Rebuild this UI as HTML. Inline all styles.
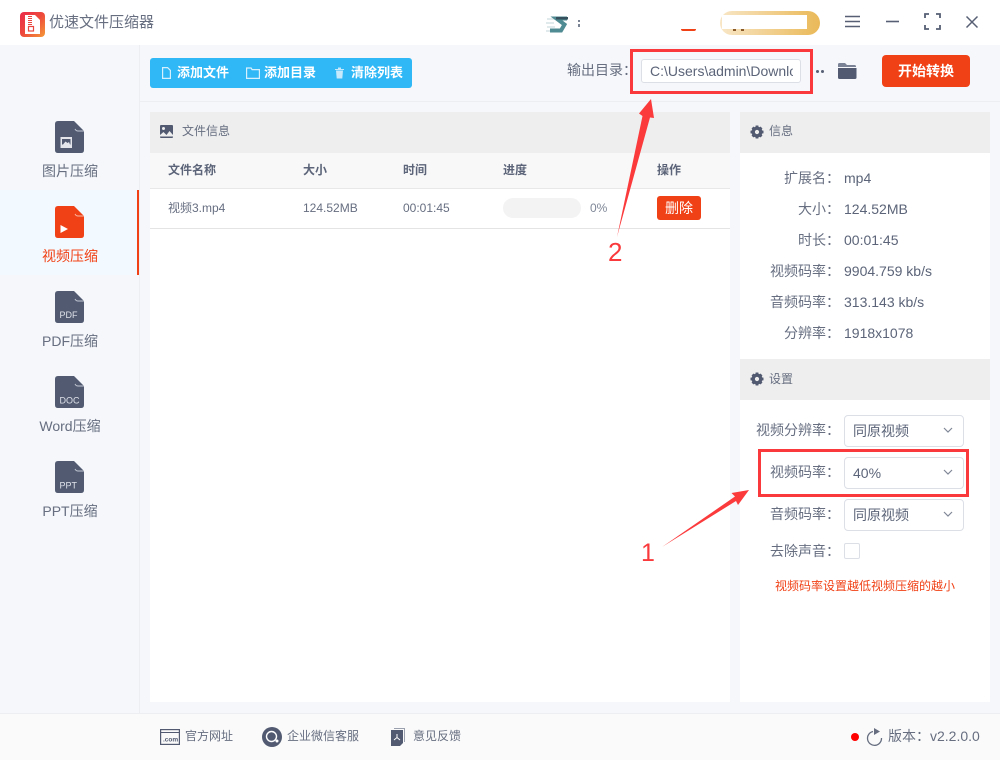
<!DOCTYPE html>
<html lang="zh-CN">
<head>
<meta charset="utf-8">
<title>优速文件压缩器</title>
<style>
html,body{margin:0;padding:0}
body{width:1000px;height:760px;position:relative;overflow:hidden;background:#f5f7fa;font-family:"Liberation Sans","Noto Sans CJK SC",sans-serif;color:#5b6478;font-size:13px}
.a{position:absolute}
.t{position:absolute;white-space:nowrap;line-height:18px}
.c{transform:translateX(-50%)}
.r{text-align:right}
svg{position:absolute;overflow:visible}
.sel{position:absolute;left:844px;width:118px;height:30px;border:1px solid #dcdfe6;border-radius:4px;background:#fff}
.sel span{position:absolute;left:8px;top:6px;font-size:14px;line-height:18px;color:#5b6478}
.sel svg{left:98px;top:11px}
</style>
</head>
<body>
<!-- title bar -->
<div class="a" style="left:0;top:0;width:1000px;height:45px;background:#fff"></div>
<div class="a" style="left:20px;top:12px;width:25px;height:25px;border-radius:4px;background:linear-gradient(135deg,#ea2b4a 0%,#ee4a3c 50%,#f59a37 100%)"></div>
<svg style="left:25px;top:15px" width="15" height="19" viewBox="0 0 15 19"><path d="M0 0h10l5 5v14H0z" fill="#fff"/><path d="M3 1.500h4M3 3.500h4M3 5.500h4M3 7.500h4M3 9.500h4" stroke="#e8463f" stroke-width="1"/><rect x="3.500" y="11.500" width="5" height="4.500" fill="none" stroke="#e8463f" stroke-width="1.200"/></svg>
<div class="t" style="left:49px;top:13px;font-size:15px;line-height:20px;color:#666e80">优速文件压缩器</div>

<svg style="left:546px;top:15px" width="24" height="19" viewBox="0 0 24 19"><path d="M1 4h9M0 8h8M1 12h8M0 16h8" stroke="#d5e3e5" stroke-width="1.600"/><path d="M21 3.500H10.500L18.500 9.500 15 15.500H4" fill="none" stroke="#4f8b92" stroke-width="4"/><path d="M10 2h12v2.500H10z" fill="#36505e"/></svg>
<div class="a" style="left:578px;top:20px;width:2px;height:2px;background:#7b8494"></div>
<div class="a" style="left:578px;top:24px;width:2px;height:3px;background:#7b8494"></div>
<div class="a" style="left:681px;top:29px;width:15px;height:2px;background:#f04116;border-radius:0 0 6px 6px"></div>
<div class="a" style="left:720px;top:11px;width:100px;height:24px;border-radius:12px;background:linear-gradient(90deg,#f8e6c6,#eab958)"></div>
<div class="a" style="left:722px;top:15px;width:85px;height:14px;background:#fff"></div>
<div class="a" style="left:733px;top:29px;width:3px;height:2px;background:#8a5a2a"></div>
<div class="a" style="left:741px;top:29px;width:3px;height:2px;background:#8a5a2a"></div>

<svg style="left:844px;top:15px" width="18" height="13" viewBox="0 0 18 13"><path d="M1 1.500h15M1 6.500h15M1 11.500h15" stroke="#565f74" stroke-width="1.600"/></svg>
<svg style="left:886px;top:20px" width="15" height="3" viewBox="0 0 15 3"><path d="M0 1.500h13" stroke="#565f74" stroke-width="1.600"/></svg>
<svg style="left:924px;top:13px" width="17" height="17" viewBox="0 0 17 17"><path d="M1 5V1h4M12 1h4v4M16 12v4h-4M5 16H1v-4" fill="none" stroke="#565f74" stroke-width="1.800"/></svg>
<svg style="left:965px;top:15px" width="14" height="14" viewBox="0 0 14 14"><path d="M1.500 1.500l11 11M12.500 1.500l-11 11" stroke="#565f74" stroke-width="1.500"/></svg>

<!-- structure lines -->
<div class="a" style="left:139px;top:45px;width:1px;height:668px;background:#eceef1"></div>
<div class="a" style="left:140px;top:101px;width:860px;height:1px;background:#eceef1"></div>

<!-- toolbar -->
<div class="a" style="left:150px;top:58px;width:262px;height:30px;border-radius:3px;background:#2fb7f6"></div>
<svg style="left:162px;top:67px" width="9" height="12" viewBox="0 0 9 12"><path d="M.6.600h5l2.800 2.800v8H.6z" fill="none" stroke="#d7f0fd" stroke-width="1.200"/></svg>
<div class="t" style="left:177px;top:64px;font-size:13px;font-weight:700;color:#fff">添加文件</div>
<svg style="left:246px;top:67px" width="14" height="12" viewBox="0 0 14 12"><path d="M.6 1h4.500l1 1.600h7.300v8.800H.6z" fill="none" stroke="#d7f0fd" stroke-width="1.200"/></svg>
<div class="t" style="left:264px;top:64px;font-size:13px;font-weight:700;color:#fff">添加目录</div>
<svg style="left:335px;top:67px" width="9" height="12" viewBox="0 0 9 12"><path d="M0 2h9v1H0zM3 .5h3V2H3z" fill="#c6e9fb"/><path d="M1 3.500h7L7.300 11.500H1.700z" fill="#c6e9fb"/></svg>
<div class="t" style="left:351px;top:64px;font-size:13px;font-weight:700;color:#fff">清除列表</div>

<div class="t" style="left:567px;top:61px;font-size:14px;color:#666e80">输出目录：</div>
<div class="a" style="left:641px;top:59px;width:158px;height:22px;border:1px solid #dcdfe6;border-radius:3px;background:#fff"></div>
<div class="a" style="left:650px;top:61px;width:143px;height:20px;overflow:hidden;white-space:nowrap;font-size:14px;line-height:20px;color:#5b6478">C:\Users\admin\Downloads</div>
<div class="a" style="left:816px;top:70px;width:3px;height:3px;border-radius:50%;background:#565f74"></div>
<div class="a" style="left:821px;top:70px;width:3px;height:3px;border-radius:50%;background:#565f74"></div>
<svg style="left:837px;top:62px" width="20" height="18" viewBox="0 0 20 18"><path d="M1 2.500Q1 1 2.500 1H8l2 2h7.500Q19 3 19 4.500V5H1z" fill="#7a8296"/><path d="M1 6h18.500v9.500q0 1.500-1.500 1.500H2.500Q1 17 1 15.500z" fill="#515a71"/></svg>
<div class="a" style="left:882px;top:55px;width:88px;height:32px;border-radius:4px;background:#f04116;color:#fff;font-size:14px;font-weight:700;line-height:32px;text-align:center">开始转换</div>

<!-- sidebar -->
<div class="a" style="left:0;top:190px;width:137px;height:85px;background:#f3faff"></div>
<div class="a" style="left:137px;top:190px;width:2px;height:85px;background:#f04116"></div>

<svg style="left:55px;top:121px" width="29" height="32" viewBox="0 0 29 32"><path d="M3 0h16L29 10V29q0 3-3 3H3q-3 0-3-3V3q0-3 3-3z" fill="#515a71"/><path d="M20 8q1 2 3 2H29" fill="none" stroke="#c3c8d3" stroke-width=".9"/><rect x="5.500" y="16" width="11.500" height="11" fill="#e4e6ec"/><rect x="7" y="18" width="8.500" height="5.500" fill="#515a71"/><path d="M8 23.500l2.500-3 2 1.500 1.500-1 1 2.500z" fill="#e4e6ec"/></svg>
<div class="t c" style="left:70px;top:162px;font-size:14px;color:#666e80">图片压缩</div>

<svg style="left:55px;top:206px" width="29" height="32" viewBox="0 0 29 32"><path d="M3 0h16L29 10V29q0 3-3 3H3q-3 0-3-3V3q0-3 3-3z" fill="#f04116"/><path d="M20 8q1 2 3 2H29" fill="none" stroke="#f9b9a6" stroke-width=".9"/><path d="M5.500 19l7.500 4-7.500 4z" fill="#fff"/></svg>
<div class="t c" style="left:70px;top:247px;font-size:14px;color:#f04116">视频压缩</div>

<svg style="left:55px;top:291px" width="29" height="32" viewBox="0 0 29 32"><path d="M3 0h16L29 10V29q0 3-3 3H3q-3 0-3-3V3q0-3 3-3z" fill="#515a71"/><path d="M20 8q1 2 3 2H29" fill="none" stroke="#c3c8d3" stroke-width=".9"/><text x="4.500" y="27" font-size="9" fill="#dfe2e9" font-family="Liberation Sans">PDF</text></svg>
<div class="t c" style="left:70px;top:332px;font-size:14px;color:#666e80">PDF压缩</div>

<svg style="left:55px;top:376px" width="29" height="32" viewBox="0 0 29 32"><path d="M3 0h16L29 10V29q0 3-3 3H3q-3 0-3-3V3q0-3 3-3z" fill="#515a71"/><path d="M20 8q1 2 3 2H29" fill="none" stroke="#c3c8d3" stroke-width=".9"/><text x="4.500" y="27.500" font-size="9" fill="#dfe2e9" font-family="Liberation Sans">DOC</text></svg>
<div class="t c" style="left:70px;top:417px;font-size:14px;color:#666e80">Word压缩</div>

<svg style="left:55px;top:461px" width="29" height="32" viewBox="0 0 29 32"><path d="M3 0h16L29 10V29q0 3-3 3H3q-3 0-3-3V3q0-3 3-3z" fill="#515a71"/><path d="M20 8q1 2 3 2H29" fill="none" stroke="#c3c8d3" stroke-width=".9"/><text x="4.500" y="27.500" font-size="9" fill="#dfe2e9" font-family="Liberation Sans">PPT</text></svg>
<div class="t c" style="left:70px;top:502px;font-size:14px;color:#666e80">PPT压缩</div>

<!-- left panel -->
<div class="a" style="left:150px;top:112px;width:580px;height:590px;background:#fff"></div>
<div class="a" style="left:150px;top:112px;width:580px;height:41px;background:#eeeeee"></div>
<svg style="left:160px;top:125px" width="13" height="13" viewBox="0 0 13 13"><rect width="13" height="13" rx="1" fill="#515a71"/><circle cx="3.500" cy="3.500" r="1.500" fill="#eee"/><path d="M0 10l3.500-3 3 3 3-4 3.500 4v1.500H0z" fill="#eee"/></svg>
<div class="t" style="left:182px;top:122px;font-size:12px;color:#666e80">文件信息</div>

<div class="a" style="left:150px;top:153px;width:580px;height:35px;background:#f8f8f8"></div>
<div class="a" style="left:150px;top:188px;width:580px;height:1px;background:#e8e8e8"></div>
<div class="t" style="left:168px;top:161px;font-size:12px;font-weight:700;color:#5b6478">文件名称</div>
<div class="t" style="left:303px;top:161px;font-size:12px;font-weight:700;color:#5b6478">大小</div>
<div class="t" style="left:403px;top:161px;font-size:12px;font-weight:700;color:#5b6478">时间</div>
<div class="t" style="left:503px;top:161px;font-size:12px;font-weight:700;color:#5b6478">进度</div>
<div class="t" style="left:657px;top:161px;font-size:12px;font-weight:700;color:#5b6478">操作</div>

<div class="t" style="left:168px;top:199px;font-size:12px;color:#666e80">视频3.mp4</div>
<div class="t" style="left:303px;top:199px;font-size:12px;color:#666e80">124.52MB</div>
<div class="t" style="left:403px;top:199px;font-size:12px;color:#666e80">00:01:45</div>
<div class="a" style="left:503px;top:198px;width:78px;height:20px;border-radius:10px;background:#f3f3f3"></div>
<div class="t" style="left:590px;top:199px;font-size:12px;color:#7f8797">0%</div>
<div class="a" style="left:657px;top:196px;width:44px;height:24px;border-radius:3px;background:#f04116;color:#fff;font-size:14px;line-height:24px;text-align:center">删除</div>
<div class="a" style="left:150px;top:228px;width:580px;height:1px;background:#e4e4e4"></div>

<!-- right panel -->
<div class="a" style="left:740px;top:112px;width:250px;height:590px;background:#fff"></div>
<div class="a" style="left:740px;top:112px;width:250px;height:41px;background:#eeeeee"></div>
<svg style="left:750px;top:125px" width="14" height="14" viewBox="0 0 14 14"><circle cx="7" cy="7" r="3.800" fill="none" stroke="#515a71" stroke-width="3.400"/><path d="M7 .5v3M7 10.500v3M.5 7h3M10.500 7h3M2.500 2.500l2 2M9.500 9.500l2 2M2.500 11.500l2-2M9.500 4.500l2-2" stroke="#515a71" stroke-width="2.800"/></svg>
<div class="t" style="left:769px;top:122px;font-size:12px;color:#666e80">信息</div>

<div class="t r" style="left:740px;width:100px;top:169px;font-size:14px;color:#666e80">扩展名：</div>
<div class="t r" style="left:740px;width:100px;top:200px;font-size:14px;color:#666e80">大小：</div>
<div class="t r" style="left:740px;width:100px;top:231px;font-size:14px;color:#666e80">时长：</div>
<div class="t r" style="left:740px;width:100px;top:262px;font-size:14px;color:#666e80">视频码率：</div>
<div class="t r" style="left:740px;width:100px;top:293px;font-size:14px;color:#666e80">音频码率：</div>
<div class="t r" style="left:740px;width:100px;top:324px;font-size:14px;color:#666e80">分辨率：</div>
<div class="t" style="left:844px;top:169px;font-size:14px">mp4</div>
<div class="t" style="left:844px;top:200px;font-size:14px">124.52MB</div>
<div class="t" style="left:844px;top:231px;font-size:14px">00:01:45</div>
<div class="t" style="left:844px;top:262px;font-size:14px">9904.759 kb/s</div>
<div class="t" style="left:844px;top:293px;font-size:14px">313.143 kb/s</div>
<div class="t" style="left:844px;top:324px;font-size:14px">1918x1078</div>

<div class="a" style="left:740px;top:359px;width:250px;height:41px;background:#eeeeee"></div>
<svg style="left:750px;top:372px" width="14" height="14" viewBox="0 0 14 14"><circle cx="7" cy="7" r="3.800" fill="none" stroke="#515a71" stroke-width="3.400"/><path d="M7 .5v3M7 10.500v3M.5 7h3M10.500 7h3M2.500 2.500l2 2M9.500 9.500l2 2M2.500 11.500l2-2M9.500 4.500l2-2" stroke="#515a71" stroke-width="2.800"/></svg>
<div class="t" style="left:769px;top:370px;font-size:12px;color:#666e80">设置</div>

<div class="t r" style="left:740px;width:100px;top:421px;font-size:14px;color:#666e80">视频分辨率：</div>
<div class="t r" style="left:740px;width:100px;top:463px;font-size:14px;color:#666e80">视频码率：</div>
<div class="t r" style="left:740px;width:100px;top:505px;font-size:14px;color:#666e80">音频码率：</div>
<div class="t r" style="left:740px;width:100px;top:542px;font-size:14px;color:#666e80">去除声音：</div>

<div class="sel" style="top:415px"><span>同原视频</span><svg width="10" height="7" viewBox="0 0 10 7"><path d="M1 1l4 4 4-4" fill="none" stroke="#7f8797" stroke-width="1.200"/></svg></div>
<div class="sel" style="top:457px"><span>40%</span><svg width="10" height="7" viewBox="0 0 10 7"><path d="M1 1l4 4 4-4" fill="none" stroke="#7f8797" stroke-width="1.200"/></svg></div>
<div class="sel" style="top:499px"><span>同原视频</span><svg width="10" height="7" viewBox="0 0 10 7"><path d="M1 1l4 4 4-4" fill="none" stroke="#7f8797" stroke-width="1.200"/></svg></div>
<div class="a" style="left:844px;top:543px;width:14px;height:14px;border:1px solid #dcdfe6;border-radius:2px;background:#fff"></div>
<div class="t" style="left:775px;top:577px;font-size:12px;color:#f04116">视频码率设置越低视频压缩的越小</div>

<!-- footer -->
<div class="a" style="left:0;top:713px;width:1000px;height:47px;background:#fafafa;border-top:1px solid #eceef1;box-sizing:border-box"></div>
<svg style="left:160px;top:729px" width="20" height="16" viewBox="0 0 20 16"><rect x=".6" y=".6" width="18.800" height="14.800" fill="none" stroke="#515a71" stroke-width="1.200"/><path d="M1 3.500h18" stroke="#515a71" stroke-width="1"/><text x="3" y="12.500" font-size="6.500" font-weight="700" fill="#515a71" font-family="Liberation Sans">.com</text></svg>
<div class="t" style="left:185px;top:727px;font-size:12px;color:#666e80">官方网址</div>
<svg style="left:262px;top:727px" width="20" height="20" viewBox="0 0 20 20"><circle cx="10" cy="10" r="10" fill="#515a71"/><circle cx="9.500" cy="9.500" r="5" fill="none" stroke="#fff" stroke-width="1.400"/><circle cx="15" cy="14" r="1.500" fill="#fff"/></svg>
<div class="t" style="left:287px;top:727px;font-size:12px;color:#666e80">企业微信客服</div>
<svg style="left:391px;top:728px" width="15" height="18" viewBox="0 0 15 18"><path d="M3 0h11v14h-1V1H3z" fill="#9aa0ae"/><path d="M0 2h12v13l-3 3H0z" fill="#515a71"/><path d="M6 6v4M3 12l3-2.500 3 2.500" fill="none" stroke="#fff" stroke-width="1"/></svg>
<div class="t" style="left:413px;top:727px;font-size:12px;color:#666e80">意见反馈</div>

<div class="a" style="left:851px;top:733px;width:8px;height:8px;border-radius:50%;background:#f00"></div>
<svg style="left:866px;top:728px" width="17" height="18" viewBox="0 0 17 18"><path d="M7 3.500a7 7 0 1 0 8.500 6.500" fill="none" stroke="#666e80" stroke-width="1.300"/><path d="M8 0l6 3.500-6 3.500z" fill="#666e80"/></svg>
<div class="t" style="left:888px;top:727px;font-size:14px;color:#666e80">版本：v2.2.0.0</div>

<!-- annotations -->
<svg style="left:0;top:0" width="1000" height="760" viewBox="0 0 1000 760">
<rect x="631.500" y="50.500" width="180" height="42" fill="none" stroke="#f9393b" stroke-width="3"/>
<rect x="759.500" y="450.500" width="208" height="45" fill="none" stroke="#f9393b" stroke-width="3"/>
<path d="M617 237L642.500 116 639 113.500 651 99 654 118 650 117.500z" fill="#fb3a3c"/>
<path d="M662 547L735 496.500 731.500 493 749 490 738 505 736 501z" fill="#fb3a3c"/>
<text x="608" y="261" font-size="26" fill="#f9393b" font-family="Liberation Sans">2</text>
<text x="641" y="561" font-size="25" fill="#f9393b" font-family="Liberation Sans">1</text>
</svg>
</body>
</html>
